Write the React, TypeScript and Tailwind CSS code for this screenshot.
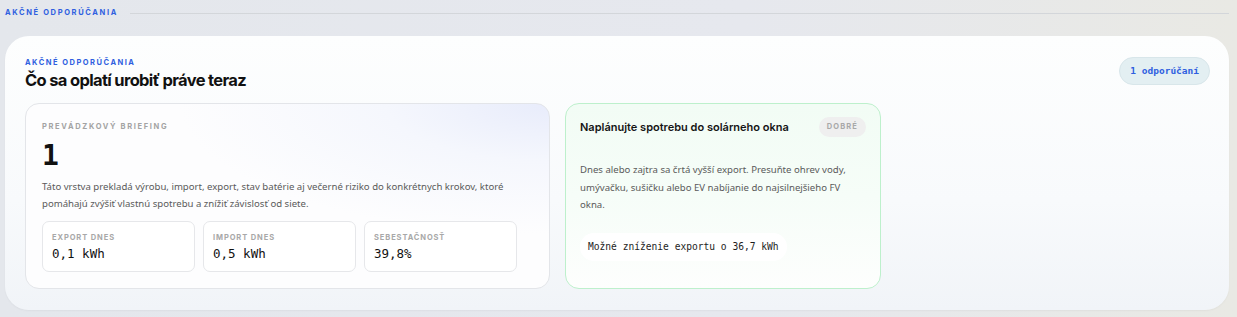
const stats = [
  { label: "EXPORT DNES", value: "0,1 kWh" },
  { label: "IMPORT DNES", value: "0,5 kWh" },
  { label: "SEBESTAČNOSŤ", value: "39,8%" },
];

const sans = "font-['Inter','Noto_Sans',sans-serif]";
const body = "font-['Noto_Sans','Inter',sans-serif]";
const mono = "font-['DejaVu_Sans_Mono','Liberation_Mono',monospace]";

export default function App() {
  return (
    <div className="min-h-[317px] w-[1237px] bg-[linear-gradient(90deg,#e4e7ec_0%,#e6e8ee_60%,#e9e9e4_100%)] pl-[5px] pr-[8px] pt-[6px] pb-[8px]">
      <div className="flex items-center gap-3 h-[14px]">
        <span className={`${sans} text-[7.5px] font-bold tracking-[0.22em] text-[#2f5fe0]`}>
          AKČNÉ ODPORÚČANIA
        </span>
        <div className="h-px flex-1 bg-[#d3d6da]" />
      </div>

      <section className="mt-[16px] rounded-[24px] bg-[linear-gradient(180deg,#fdfefe_0%,#f8fafc_60%,#f1f4f8_100%)] px-5 pt-[22px] pb-[21px] shadow-[0_1px_2px_rgba(0,0,0,0.04)]">
        <div className="flex items-start justify-between">
          <div>
            <p className={`${sans} text-[7.5px] font-bold tracking-[0.2em] text-[#2f5fe0] leading-[10px]`}>
              AKČNÉ ODPORÚČANIA
            </p>
            <h2 className={`${sans} mt-[1px] text-[16.5px] font-bold tracking-[-0.04em] text-[#111] leading-[22px]`}>
              Čo sa oplatí urobiť práve teraz
            </h2>
          </div>
          <span className={`${mono} mt-[-1px] mr-[-1px] rounded-full border border-[#d8e6ea] bg-[#e3eff2] px-[10px] py-[6px] text-[9.5px] font-bold text-[#2f5fe0]`}>
            1 odporúčaní
          </span>
        </div>

        <div className="mt-[12px] grid grid-cols-[525px_316px_1fr] gap-[15px]">
          <div className="rounded-[14px] border border-[#e3e5e9] bg-[radial-gradient(ellipse_at_100%_0%,#e8ecfb_0%,#f5f7fd_22%,#fdfdfe_50%)] pl-4 pr-[32px] pt-[18px] pb-4">
            <p className={`${sans} text-[7.5px] font-bold tracking-[0.22em] text-[#a3a3a3] leading-[10px]`}>
              PREVÁDZKOVÝ BRIEFING
            </p>
            <p className={`${mono} mt-[7px] text-[28px] font-bold leading-[34px] text-[#111]`}>1</p>
            <p className={`${body} mt-[6px] text-[9.6px] leading-[16.5px] text-[#5a5a5a]`}>
              Táto vrstva prekladá výrobu, import, export, stav batérie aj večerné riziko do konkrétnych krokov, ktoré
              pomáhajú zvýšiť vlastnú spotrebu a znížiť závislosť od siete.
            </p>
            <div className="mt-[9px] grid grid-cols-3 gap-[8px]">
              {stats.map((s) => (
                <div key={s.label} className="h-[51px] rounded-[7px] border border-[#e6e7ea] bg-white px-[9px] pt-[11px]">
                  <p className={`${sans} text-[7.5px] font-bold tracking-[0.12em] text-[#a8a8a8] leading-[10px]`}>
                    {s.label}
                  </p>
                  <p className={`${mono} mt-[2px] text-[12.5px] leading-[18px] text-[#111]`}>
                    {s.value}
                  </p>
                </div>
              ))}
            </div>
          </div>

          <div className="rounded-[14px] border border-[#bdf0cc] bg-[linear-gradient(180deg,#f2fcf5_0%,#f6fdf8_50%,#fdfefd_100%)] px-[14px] pt-[13px] pb-4">
            <div className="flex items-start justify-between">
              <h3 className={`${sans} mt-[2px] text-[11px] font-semibold text-[#151515] leading-[16px]`}>
                Naplánujte spotrebu do solárneho okna
              </h3>
              <span className={`${sans} rounded-full bg-[#efefef] px-[8px] py-[5px] text-[7.5px] font-bold tracking-[0.15em] text-[#a8a8a8] leading-[10px]`}>
                DOBRÉ
              </span>
            </div>
            <p className={`${body} mt-[24px] text-[9.6px] leading-[17.5px] text-[#5a5a5a]`}>
              Dnes alebo zajtra sa črtá vyšší export. Presuňte ohrev vody, umývačku, sušičku alebo EV nabíjanie do najsilnejšieho FV okna.
            </p>
            <div className="mt-[19px] inline-flex rounded-full bg-white px-[8px] py-[8px]">
              <span className={`${mono} text-[9.6px] text-[#1d1d1d] leading-[12px]`}>
                Možné zníženie exportu o 36,7 kWh
              </span>
            </div>
          </div>
          <div />
        </div>
      </section>
    </div>
  );
}
